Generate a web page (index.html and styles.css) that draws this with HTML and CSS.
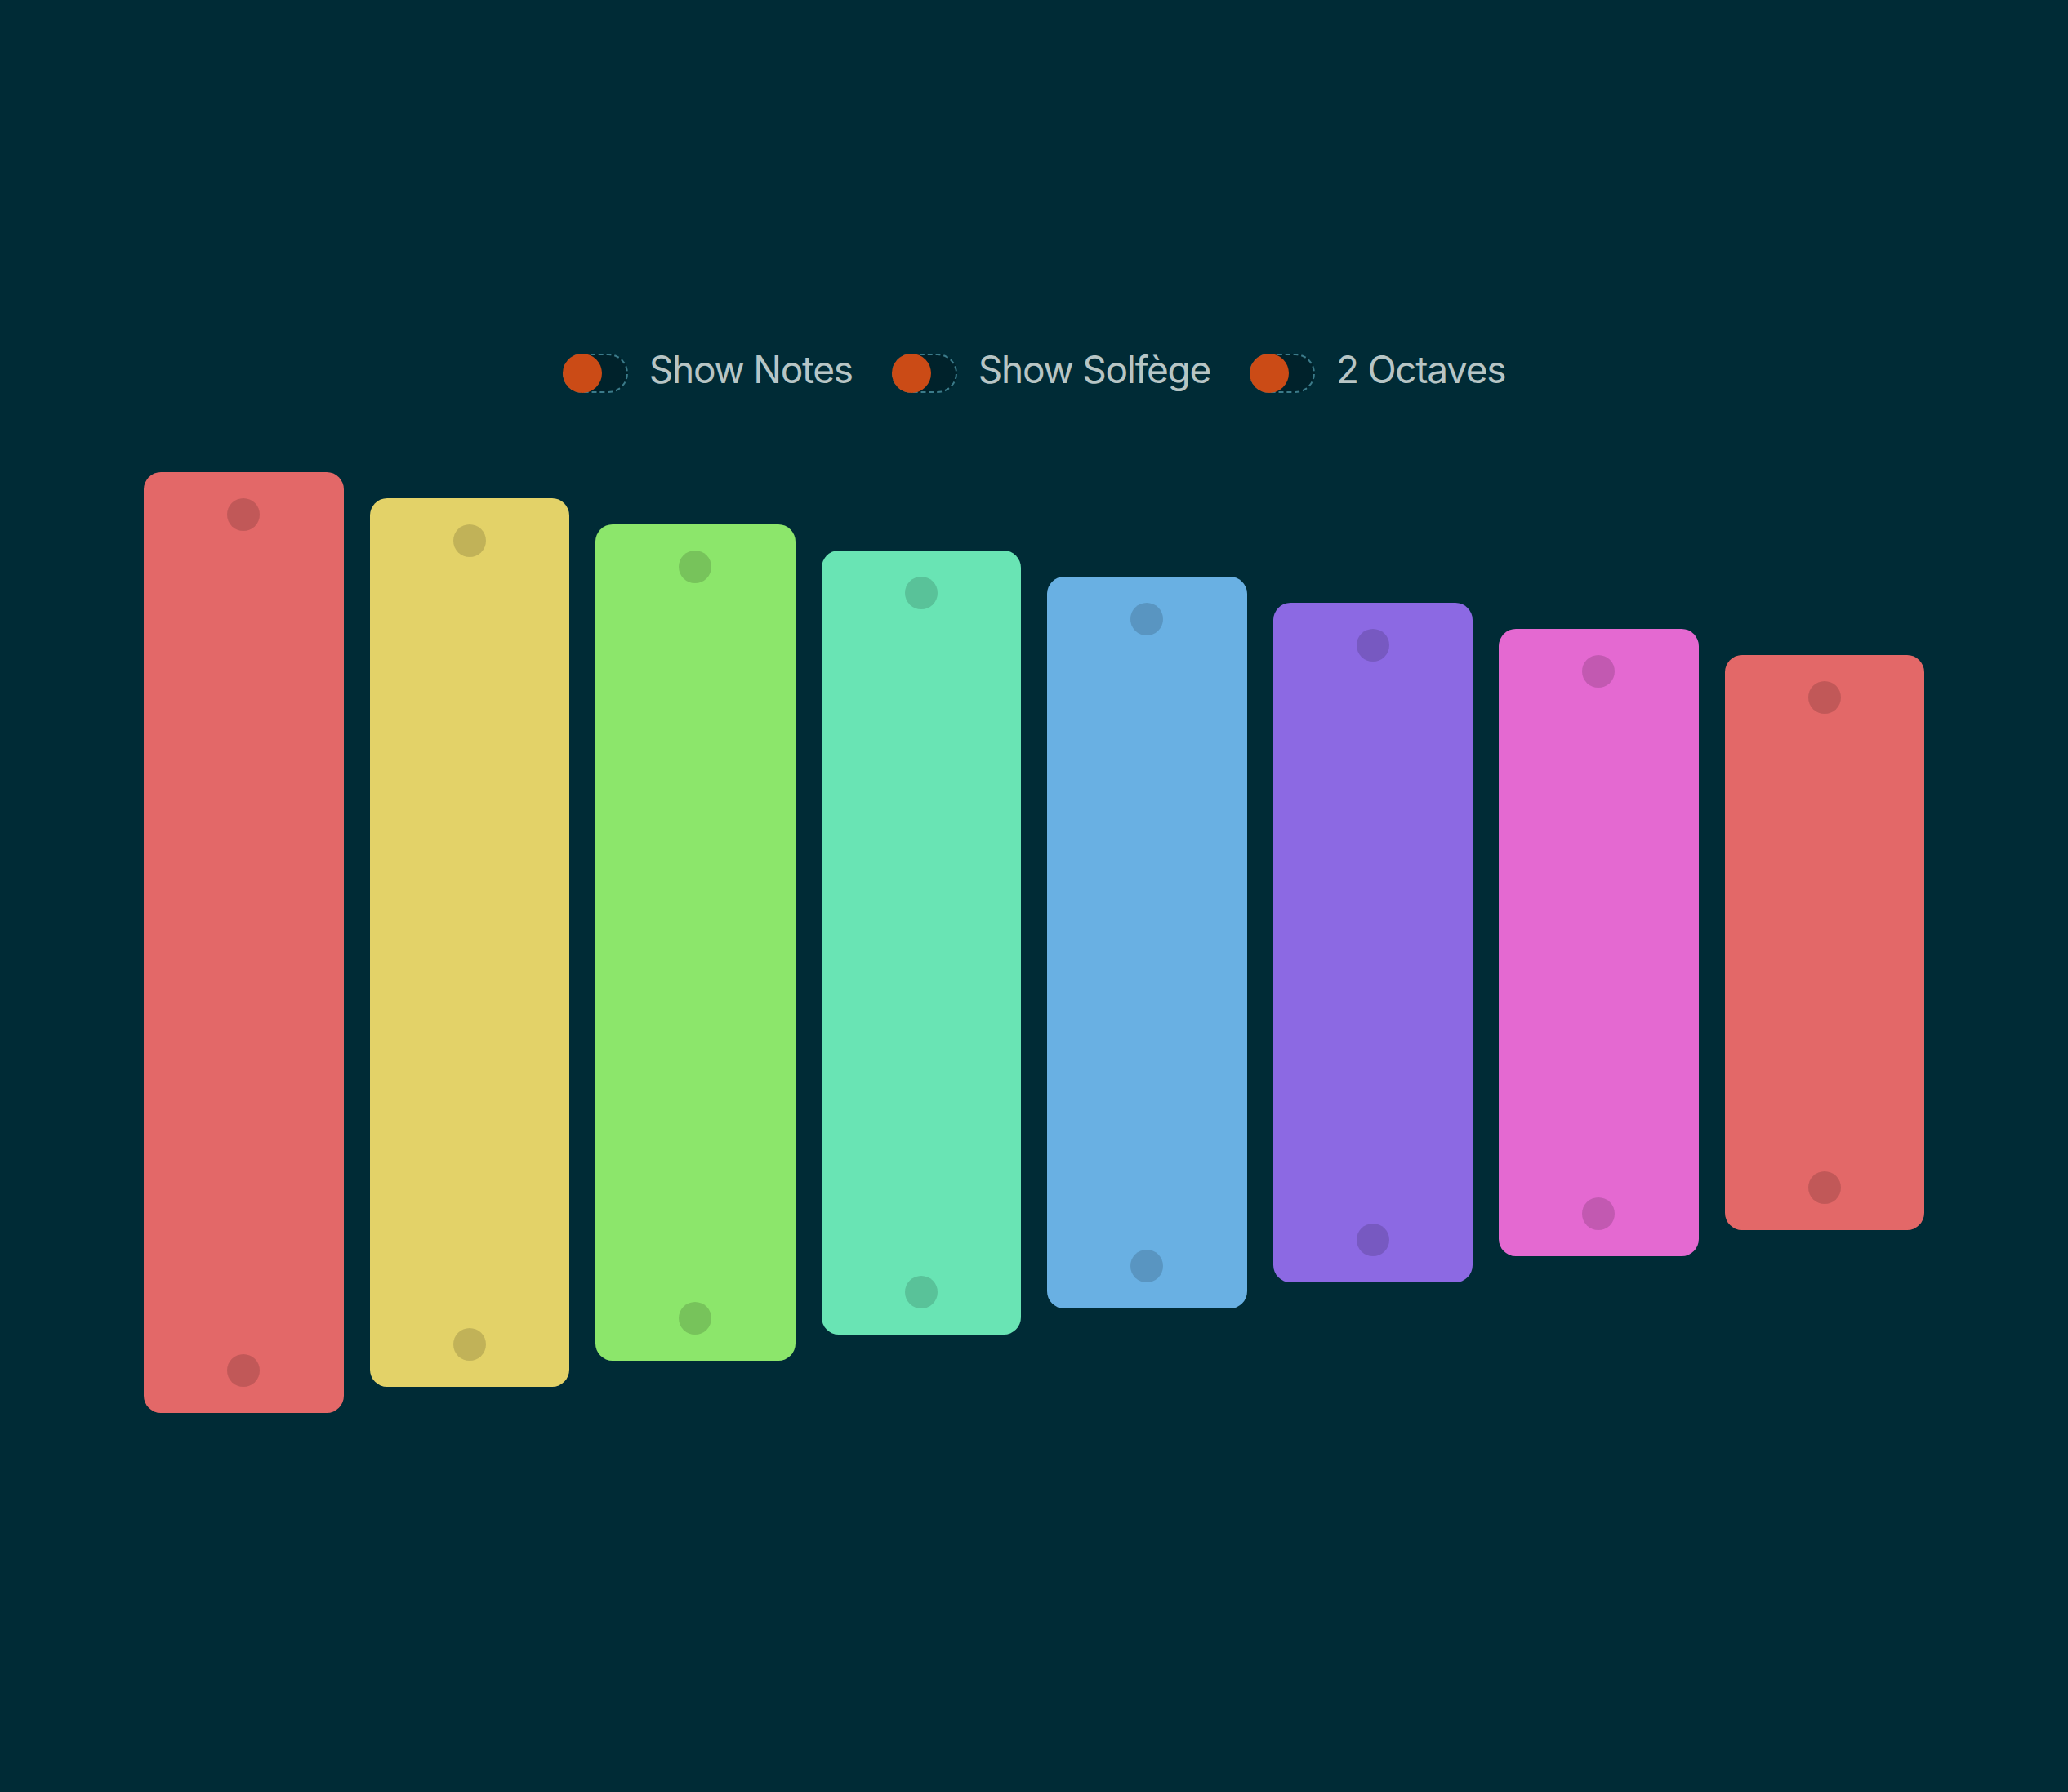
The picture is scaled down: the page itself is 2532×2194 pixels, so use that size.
FILE: index.html
```html
<!DOCTYPE html>
<html lang="en">
<head>
<meta charset="utf-8">
<title>Xylophone</title>
<link rel="stylesheet" href="styles.css">
</head>
<body>
<main class="app">
  <div class="controls">
    <label class="toggle">
      <span class="switch"><span class="knob"></span></span>
      <span class="label">Show Notes</span>
    </label>
    <label class="toggle">
      <span class="switch"><span class="knob"></span></span>
      <span class="label">Show Solfège</span>
    </label>
    <label class="toggle">
      <span class="switch"><span class="knob"></span></span>
      <span class="label">2 Octaves</span>
    </label>
  </div>
  <div class="bars">
    <div class="bar bar-c"><span class="dot"></span><span class="dot"></span></div>
    <div class="bar bar-d"><span class="dot"></span><span class="dot"></span></div>
    <div class="bar bar-e"><span class="dot"></span><span class="dot"></span></div>
    <div class="bar bar-f"><span class="dot"></span><span class="dot"></span></div>
    <div class="bar bar-g"><span class="dot"></span><span class="dot"></span></div>
    <div class="bar bar-a"><span class="dot"></span><span class="dot"></span></div>
    <div class="bar bar-b"><span class="dot"></span><span class="dot"></span></div>
    <div class="bar bar-c2"><span class="dot"></span><span class="dot"></span></div>
  </div>
</main>
</body>
</html>
```

FILE: styles.css
```css
html, body {
  margin: 0;
  padding: 0;
}
body {
  background: #002b36;
  min-height: 2194px;
  font-family: Inter, "Liberation Sans", sans-serif;
}
.app {
  display: flex;
  flex-direction: column;
  align-items: center;
  padding-top: 433px;
}
.controls {
  display: flex;
  align-items: center;
  gap: 48px;
  height: 48px;
}
.toggle {
  display: flex;
  align-items: center;
  gap: 26px;
}
.switch {
  position: relative;
  display: block;
  width: 80px;
  height: 48px;
  box-sizing: border-box;
  border: 2px dashed #3b7b8a;
  border-radius: 24px;
  background: #00222b;
}
.knob {
  position: absolute;
  left: -2px;
  top: -2px;
  width: 48px;
  height: 48px;
  border-radius: 50%;
  background: #cb4b16;
}
.label {
  color: #b7c5c5;
  font-size: 46px;
  line-height: 48px;
  letter-spacing: -1.3px;
  padding-bottom: 10px;
}
.bars {
  display: flex;
  align-items: center;
  gap: 32px;
  width: 2180px;
  height: 1152px;
  margin-top: 97px;
}
.bar {
  flex: 1;
  display: flex;
  flex-direction: column;
  justify-content: space-between;
  align-items: center;
  padding: 32px 0;
  box-sizing: border-box;
  border-radius: 21px;
}
.dot {
  width: 40px;
  height: 40px;
  border-radius: 50%;
  background: rgba(0, 0, 0, 0.15);
}
.bar-c  { background: #e36868; height: 1152px; }
.bar-d  { background: #e3d268; height: 1088px; }
.bar-e  { background: #8ce66b; height: 1024px; }
.bar-f  { background: #69e4b4; height: 960px; }
.bar-g  { background: #69b0e3; height: 896px; }
.bar-a  { background: #8c69e3; height: 832px; }
.bar-b  { background: #e469d1; height: 768px; }
.bar-c2 { background: #e36868; height: 704px; }
```
